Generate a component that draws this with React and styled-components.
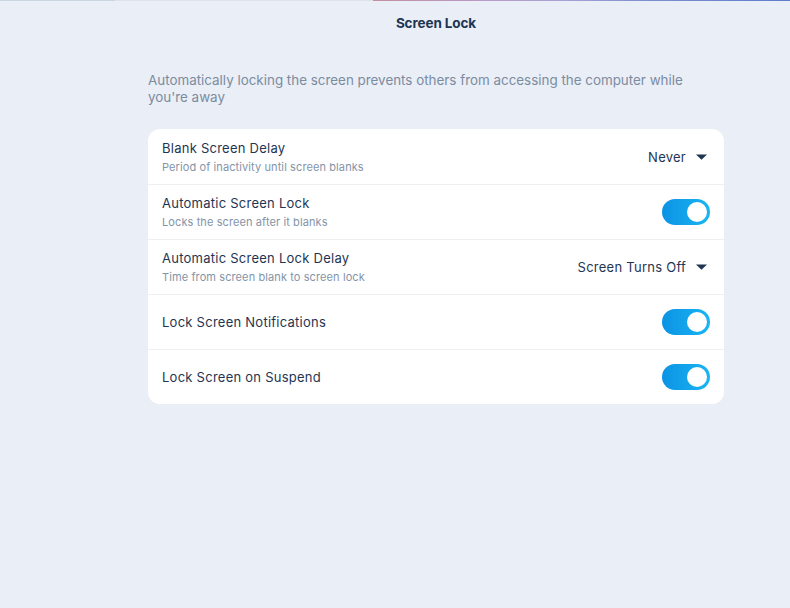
import React from "react";
import styled, { createGlobalStyle } from "styled-components";

const Global = createGlobalStyle`
  html, body { margin: 0; padding: 0; background: #eaeef6; }
  body { font-family: Inter, "Noto Sans", sans-serif; -webkit-font-smoothing: antialiased; }
  #root { min-height: 608px; }
`;

const Page = styled.div`
  width: 790px;
  height: 608px;
  background: #eaeef6;
  display: flex;
  flex-direction: column;
  overflow: hidden;
`;

const TopStrip = styled.div`
  height: 1px;
  display: flex;
  flex-shrink: 0;
`;

const StripPart = styled.div`
  height: 1px;
  width: ${(p) => p.$w}px;
  flex: ${(p) => (p.$grow ? 1 : "none")};
  background: ${(p) => p.$bg};
`;

const Main = styled.main`
  flex: 1;
  display: flex;
  flex-direction: column;
  padding-left: 82px;
`;

const Header = styled.header`
  height: 44px;
  display: flex;
  align-items: center;
  justify-content: center;
  font-size: 13.5px;
  font-weight: 700;
  color: #1c3553;
  letter-spacing: -0.1px;
`;

const Content = styled.div`
  width: 576px;
  margin: 0 auto;
  padding-top: 27px;
  display: flex;
  flex-direction: column;
  gap: 23px;
`;

const Description = styled.p`
  margin: 0;
  font-size: 13.4px;
  line-height: 17px;
  color: #7b8ca1;
  letter-spacing: 0px;
`;

const Card = styled.section`
  background: #ffffff;
  border-radius: 12px;
  display: flex;
  flex-direction: column;
  overflow: hidden;
`;

const Row = styled.div`
  height: 55px;
  box-sizing: border-box;
  display: flex;
  align-items: center;
  justify-content: space-between;
  padding: 0 14px;
  border-top: ${(p) => (p.$first ? "none" : "1px solid #edf0f3")};
`;

const Labels = styled.div`
  display: flex;
  flex-direction: column;
  gap: 4px;
`;

const Title = styled.div`
  font-size: 13px;
  line-height: 16px;
  color: #1f3552;
  letter-spacing: 0.25px;
`;

const Subtitle = styled.div`
  font-size: 11px;
  line-height: 14px;
  color: #8494a7;
  letter-spacing: 0.1px;
`;

const Dropdown = styled.div`
  display: flex;
  align-items: center;
  gap: 10px;
  padding-right: 3px;
  font-size: 13px;
  color: #1f3552;
  letter-spacing: 0.25px;
`;

const Caret = styled.svg`
  width: 11px;
  height: 6px;
  display: block;
`;

const Toggle = styled.div`
  width: 48px;
  height: 26px;
  border-radius: 13px;
  background: linear-gradient(90deg, #0b93e4 0%, #1ab5f3 100%);
  display: flex;
  align-items: center;
  justify-content: flex-end;
  padding-right: 3px;
  box-sizing: border-box;
`;

const Knob = styled.div`
  width: 20px;
  height: 20px;
  border-radius: 50%;
  background: #ffffff;
`;

const Select = ({ value }) => (
  <Dropdown>
    <span>{value}</span>
    <Caret viewBox="0 0 11 6">
      <path d="M0 0.5 L11 0.5 L5.5 5.8 Z" fill="#1f3552" />
    </Caret>
  </Dropdown>
);

const Switch = () => (
  <Toggle>
    <Knob />
  </Toggle>
);

const rows = [
  { title: "Blank Screen Delay", sub: "Period of inactivity until screen blanks", control: <Select value="Never" /> },
  { title: "Automatic Screen Lock", sub: "Locks the screen after it blanks", control: <Switch /> },
  { title: "Automatic Screen Lock Delay", sub: "Time from screen blank to screen lock", control: <Select value="Screen Turns Off" /> },
  { title: "Lock Screen Notifications", control: <Switch /> },
  { title: "Lock Screen on Suspend", control: <Switch /> },
];

export default function App() {
  return (
    <>
      <Global />
      <Page>
        <TopStrip>
          <StripPart $w={115} $bg="#c9d5e1" />
          <StripPart $w={258} $bg="#dfe3e9" />
          <StripPart $grow $bg="linear-gradient(90deg, #c28fa0 0%, #b99ac4 25%, #a9a2d4 45%, #7d8fcf 65%, #5d7ccb 100%)" />
        </TopStrip>
        <Main>
          <Header>Screen Lock</Header>
          <Content>
            <Description>
              Automatically locking the screen prevents others from accessing the computer while you're away
            </Description>
            <Card>
              {rows.map((r, i) => (
                <Row key={r.title} $first={i === 0}>
                  <Labels>
                    <Title>{r.title}</Title>
                    {r.sub && <Subtitle>{r.sub}</Subtitle>}
                  </Labels>
                  {r.control}
                </Row>
              ))}
            </Card>
          </Content>
        </Main>
      </Page>
    </>
  );
}
